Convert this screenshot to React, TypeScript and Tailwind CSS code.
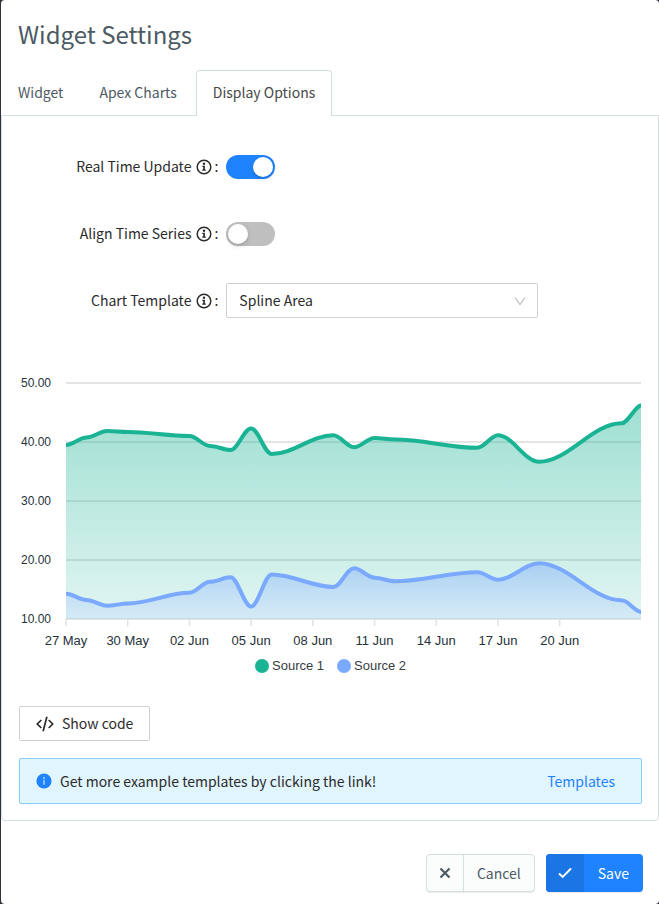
import { useState } from "react";
import type { ReactNode } from "react";

const LEFT = 47;
const RIGHT = 622;
const TOP = 12;
const BOTTOM = 248;
const DAY = 20.57;

type Point = [day: number, y: number];

const source1: Point[] = [
  [0, 74], [1, 66.5], [2, 60], [3, 61], [6, 65], [7, 75], [8, 79], [9, 57.5],
  [10, 83], [13, 64.3], [14, 76.3], [15, 67], [16, 68.5], [20, 76.8], [21, 64.3],
  [23, 90.8], [27, 52.3], [28, 34.3],
];
const source2: Point[] = [
  [0, 222.8], [1, 229], [2, 234.8], [3, 232.5], [6, 221.8], [7, 210.8], [8, 206.3],
  [9, 235.6], [10, 203.5], [13, 216], [14, 197.3], [15, 206.7], [16, 210.3],
  [20, 201.3], [21, 208.7], [23, 192.3], [27, 229.3], [28, 241],
];

const px = (d: number) => LEFT + d * DAY;

function spline(points: Point[]) {
  let d = `M${px(points[0][0])} ${points[0][1]}`;
  for (let i = 1; i < points.length; i++) {
    const [x0, y0] = [px(points[i - 1][0]), points[i - 1][1]];
    const [x1, y1] = [px(points[i][0]), points[i][1]];
    const c = (x1 - x0) * 0.35;
    d += `C${x0 + c} ${y0} ${x1 - c} ${y1} ${x1} ${y1}`;
  }
  return d;
}

const area = (points: Point[]) => `${spline(points)}V${BOTTOM}H${LEFT}Z`;

const yLabels = ["50.00", "40.00", "30.00", "20.00", "10.00"];
const xLabels = [
  "27 May", "30 May", "02 Jun", "05 Jun", "08 Jun", "11 Jun", "14 Jun", "17 Jun", "20 Jun",
];

function Chart() {
  return (
    <svg
      viewBox="0 0 623 311"
      className="block h-auto w-full font-['Liberation_Sans',Arial,sans-serif]"
      role="img"
      aria-label="Spline area chart"
    >
      <defs>
        <linearGradient id="green" x1="0" y1="0" x2="0" y2="1">
          <stop offset="0" stopColor="#1ab394" stopOpacity="0.42" />
          <stop offset="1" stopColor="#1ab394" stopOpacity="0.13" />
        </linearGradient>
        <linearGradient id="blue" x1="0" y1="0" x2="0" y2="1">
          <stop offset="0" stopColor="#7aa9ff" stopOpacity="0.46" />
          <stop offset="1" stopColor="#bcd4ff" stopOpacity="0.32" />
        </linearGradient>
        <clipPath id="plot">
          <rect x={LEFT} y="0" width={RIGHT - LEFT} height={BOTTOM} />
        </clipPath>
      </defs>
      {yLabels.map((t, i) => {
        const y = TOP + i * 59;
        return (
          <g key={t}>
            <line x1={LEFT} x2={RIGHT} y1={y} y2={y} stroke="#e4e4e4" strokeWidth="2" />
            <text x="32" y={y + 4} textAnchor="end" fontSize="12" fill="#263238">
              {t}
            </text>
          </g>
        );
      })}
      {xLabels.map((t, i) => {
        const x = px(i * 3);
        return (
          <g key={t}>
            <line x1={x} x2={x} y1={BOTTOM} y2={BOTTOM + 7} stroke="#dfe2e4" strokeWidth="1.5" />
            <text x={x} y="274" textAnchor="middle" fontSize="13" fill="#263238">
              {t}
            </text>
          </g>
        );
      })}
      <g clipPath="url(#plot)" fill="none" strokeWidth="4">
        <path d={area(source1)} fill="url(#green)" />
        <path d={spline(source1)} stroke="#1ab394" />
        <path d={area(source2)} fill="url(#blue)" />
        <path d={spline(source2)} stroke="#7aa9ff" />
      </g>
      <circle cx="243" cy="295" r="7" fill="#1ab394" />
      <text x="253" y="299" fontSize="13" fill="#373d3f">Source 1</text>
      <circle cx="325" cy="295" r="7" fill="#7aa9ff" />
      <text x="335" y="299" fontSize="13" fill="#373d3f">Source 2</text>
    </svg>
  );
}

function InfoIcon() {
  return (
    <svg viewBox="0 0 16 16" className="size-4" fill="none" aria-hidden="true">
      <circle cx="8" cy="8" r="6.8" stroke="#2b2b2b" strokeWidth="1.5" />
      <circle cx="8" cy="4.7" r="1.2" fill="#2b2b2b" />
      <path d="M6.3 6.8H8.9V10.5H9.8V11.7H6.2V10.5H7.2V8H6.3Z" fill="#2b2b2b" />
    </svg>
  );
}

function Row({ id, label, children }: { id: string; label: string; children: ReactNode }) {
  return (
    <div className="flex h-[35px] items-center gap-2">
      <label htmlFor={id} className="flex w-[32%] items-center justify-end gap-[5px]">
        {label}
        <span className="flex items-center gap-[2px]">
          <InfoIcon />:
        </span>
      </label>
      {children}
    </div>
  );
}

function Switch({ id, initial }: { id: string; initial: boolean }) {
  const [on, setOn] = useState(initial);
  return (
    <input
      id={id}
      type="checkbox"
      role="switch"
      checked={on}
      onChange={() => setOn(!on)}
      className="flex h-6 w-[49px] cursor-pointer appearance-none items-center rounded-full bg-[#bfbfbf] p-[2px] before:size-5 before:rounded-full before:bg-white before:shadow-[0_2px_4px_rgba(0,35,11,0.2)] checked:justify-end checked:bg-[#1f83ff]"
    />
  );
}

const tabs = ["Widget", "Apex Charts", "Display Options"];

export default function App() {
  return (
    <div className="min-h-screen bg-[#2f3140] pl-px font-['Noto_Sans_CJK_SC',sans-serif] text-[14px] text-[#2b2b2b]">
      <main className="flex min-h-screen flex-col rounded-[4px] bg-white">
        <h1 className="px-[17px] pt-4 text-[24px] leading-9 text-[#4c5a63]">Widget Settings</h1>
        <div role="tablist" className="mt-[18px] flex gap-[2px]">
          {tabs.map((tab) => (
            <button
              key={tab}
              type="button"
              role="tab"
              aria-selected={tab === "Display Options"}
              className="z-10 -mb-px h-[46px] rounded-t-[4px] border border-b-0 border-transparent px-4 pb-[2px] text-[#4c5a63] aria-selected:border-[#d5dfe0] aria-selected:bg-white aria-selected:text-[#484848]"
            >
              {tab}
            </button>
          ))}
        </div>
        <section className="rounded-b-[4px] border border-[#d5dfe0] pt-[33px] pr-4 pb-4 pl-[17px]">
          <div className="flex flex-col gap-8">
            <Row id="realtime" label="Real Time Update">
              <Switch id="realtime" initial={true} />
            </Row>
            <Row id="align" label="Align Time Series">
              <Switch id="align" initial={false} />
            </Row>
            <Row id="template" label="Chart Template">
              <div className="grid w-1/2 items-center">
                <select
                  id="template"
                  className="col-start-1 row-start-1 h-[35px] w-full appearance-none rounded-[2px] border border-[#d0d0d0] bg-white px-3"
                >
                  <option>Spline Area</option>
                </select>
                <svg
                  viewBox="0 0 12 10"
                  className="pointer-events-none col-start-1 row-start-1 mr-3 h-[10px] w-3 justify-self-end"
                  fill="none"
                  aria-hidden="true"
                >
                  <path d="M1 1.5L6 8.5L11 1.5" stroke="#bcbcbc" strokeWidth="1.2" />
                </svg>
              </div>
            </Row>
          </div>
          <div className="mt-[53px]">
            <Chart />
          </div>
          <button
            type="button"
            className="mt-6 flex h-[35px] items-center gap-2 rounded-[2px] border border-[#d0d0d0] px-4"
          >
            <svg viewBox="0 0 18 16" className="h-4 w-[18px]" fill="none" stroke="#2b2b2b" strokeWidth="1.7" aria-hidden="true">
              <path d="M5.3 4L1.3 8L5.3 12M12.7 4L16.7 8L12.7 12M10.9 0.8L7.1 15.2" />
            </svg>
            Show code
          </button>
          <div className="mt-[17px] flex h-[46px] items-center rounded-[2px] border border-[#8accff] bg-[#e1f5fe] pr-[26px] pl-4">
            <svg viewBox="0 0 16 16" className="mr-2 size-4" aria-hidden="true">
              <circle cx="8" cy="8" r="7.6" fill="#1f83ff" />
              <circle cx="8" cy="4.9" r="0.8" fill="#e1f5fe" />
              <path d="M7.5 6.8H8.5V11.8H7.5Z" fill="#e1f5fe" />
            </svg>
            <span className="flex-1">Get more example templates by clicking the link!</span>
            <a href="#templates" className="text-[#1f83ff]">Templates</a>
          </div>
        </section>
        <footer className="flex justify-end gap-[11px] px-4 pt-[33px] pb-3">
          <button
            type="button"
            className="flex h-[38px] items-center rounded-[4px] border border-[#d5dfe0] bg-[#fbfdfd] text-[#4c5a63] shadow-[0_1px_1px_rgba(0,0,0,0.08)]"
          >
            <span className="flex h-full w-[37px] items-center justify-center border-r border-[#d5dfe0]">
              <svg viewBox="0 0 12 12" className="size-3" stroke="#4c5a63" strokeWidth="2.2" aria-hidden="true">
                <path d="M1.5 1.5L10.5 10.5M10.5 1.5L1.5 10.5" />
              </svg>
            </span>
            <span className="px-[13px]">Cancel</span>
          </button>
          <button
            type="button"
            className="flex h-[38px] items-center overflow-hidden rounded-[4px] bg-[#1f83ff] text-white shadow-[0_1px_1px_rgba(0,0,0,0.08)]"
          >
            <span className="flex h-full w-[38px] items-center justify-center bg-[#1b75e4]">
              <svg viewBox="0 0 14 12" className="h-3 w-[14px]" fill="none" stroke="white" strokeWidth="1.9" aria-hidden="true">
                <path d="M1 6.5L4.7 10L13 1.5" />
              </svg>
            </span>
            <span className="px-[14px]">Save</span>
          </button>
        </footer>
      </main>
    </div>
  );
}
